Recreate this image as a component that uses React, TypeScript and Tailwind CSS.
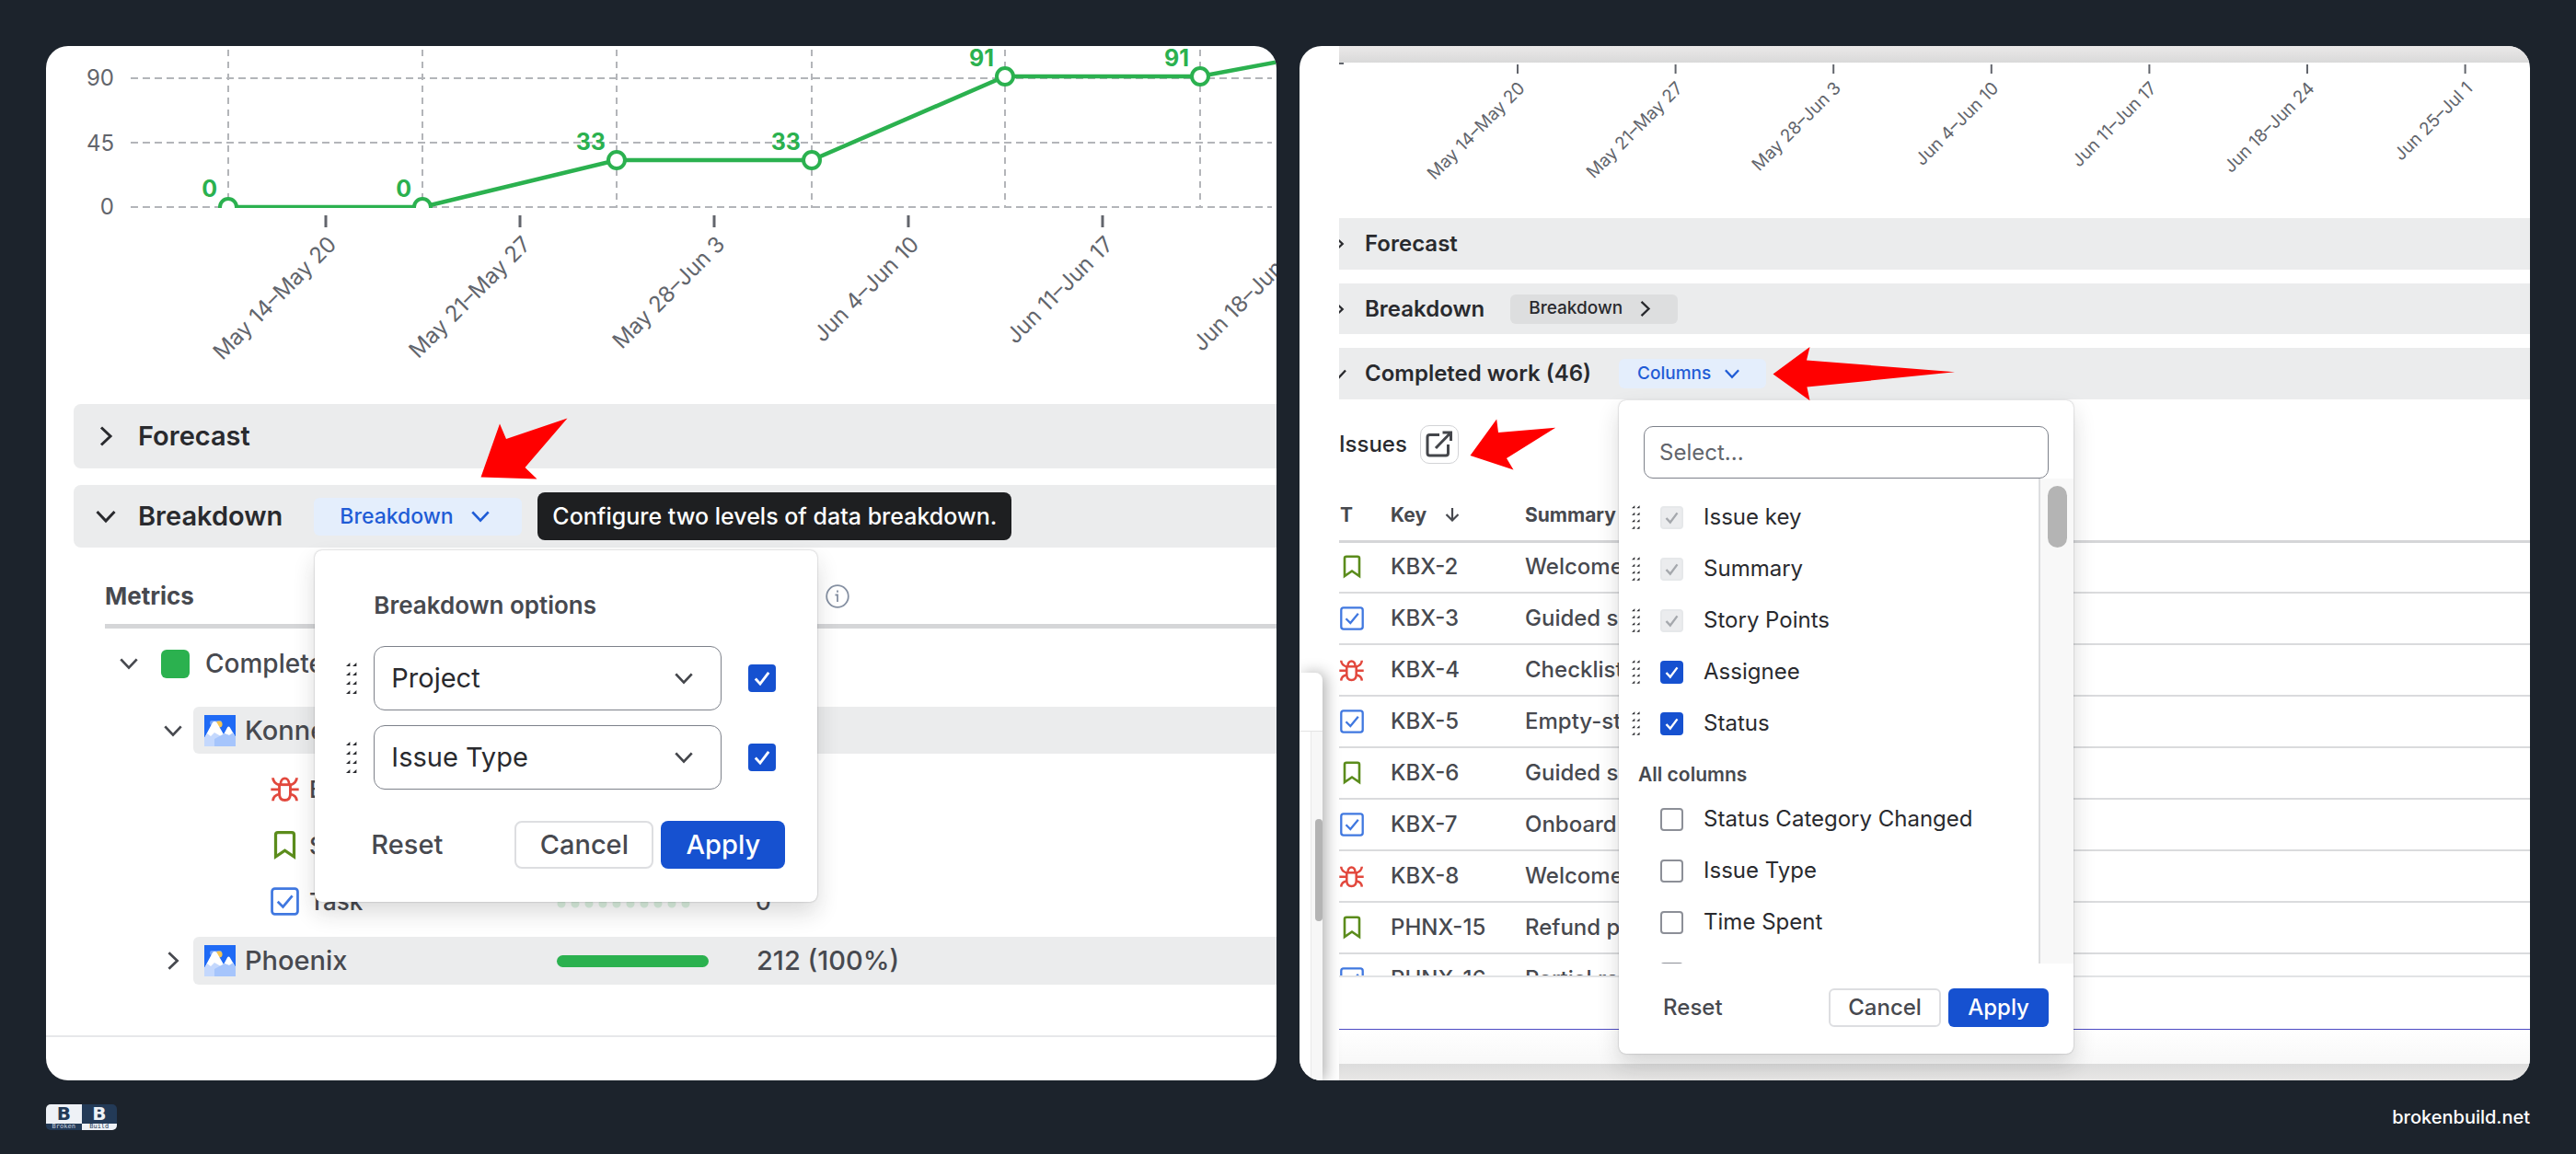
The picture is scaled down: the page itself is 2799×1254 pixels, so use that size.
import React from "react";

type IconProps = { className?: string };

function ChevronDown({ className = "" }: IconProps) {
  return (
    <svg viewBox="0 0 24 24" className={className} fill="none" stroke="currentColor" strokeWidth="3" aria-hidden="true">
      <path d="M2.5 7 L12 17 L21.5 7" />
    </svg>
  );
}

function ChevronRight({ className = "" }: IconProps) {
  return (
    <svg viewBox="0 0 24 24" className={className} fill="none" stroke="currentColor" strokeWidth="3" aria-hidden="true">
      <path d="M7 2.5 L17 12 L7 21.5" />
    </svg>
  );
}

function Grip({ className = "" }: IconProps) {
  return (
    <svg viewBox="0 0 12 36" className={className} fill="#292a2e" aria-hidden="true">
      {[1, 11, 21, 31].map((y) => (
        <g key={y}>
          <path d={`M0 ${y + 4} L4.4 ${y} L4.4 ${y + 4} Z`} />
          <path d={`M7 ${y + 4} L11.4 ${y} L11.4 ${y + 4} Z`} />
        </g>
      ))}
    </svg>
  );
}

function BugIcon({ className = "" }: IconProps) {
  return (
    <svg viewBox="0 0 27 25" className={className} fill="none" stroke="#e2483d" strokeWidth="2.5" aria-label="Bug" role="img">
      <path d="M7.5 8.3 H19.5" />
      <path d="M9.4 8.3 C9.4 0.4 17.6 0.4 17.6 8.3" />
      <path d="M8.3 8.3 V17 C8.3 21 10.2 23 13.5 23 C16.8 23 18.7 21 18.7 17 V8.3" />
      <path d="M0.3 12.8 H8 M19 12.8 H26.7" />
      <path d="M2.2 1.8 C2.4 5.3 4.6 7.4 8.3 8.6 M24.8 1.8 C24.6 5.3 22.4 7.4 18.7 8.6" />
      <path d="M2.2 23.6 C2.4 20 4.6 18 8.5 17.2 M24.8 23.6 C24.6 20 22.4 18 18.5 17.2" />
    </svg>
  );
}

function StoryIcon({ className = "" }: IconProps) {
  return (
    <svg viewBox="0 0 20 26" className={className} fill="none" stroke="#5b8c1c" strokeWidth="2.6" aria-label="Story" role="img">
      <path d="M2 23 V3.8 C2 2.5 2.6 1.8 4 1.8 H16 C17.4 1.8 18 2.5 18 3.8 V23 L10 17.5 Z" />
    </svg>
  );
}

function TaskIcon({ className = "" }: IconProps) {
  return (
    <svg viewBox="0 0 26 26" className={className} fill="none" stroke="#4078e0" strokeWidth="2.3" aria-label="Task" role="img">
      <rect x="1.3" y="1.3" width="23.4" height="23.4" rx="2.6" />
      <path d="M6.5 13.2 L11.3 18 L19.8 7.8" />
    </svg>
  );
}

function ProjectAvatar() {
  return (
    <svg viewBox="0 0 34 34" className="h-[34px] w-[34px] shrink-0" aria-hidden="true">
      <rect width="34" height="34" fill="#1f6af5" />
      <rect x="6" y="6" width="13" height="5" rx="2" fill="#6fa0fa" />
      <circle cx="16" cy="10" r="3.6" fill="#f5c451" />
      <path d="M0 25 L9 8 C10 6.5 12.5 6.5 13.5 8 L21 21 L25 13.5 C25.8 12 27 12 27.8 13.5 L34 24 V34 H0 Z" fill="#ffffff" />
      <path d="M0 25 L3 20 L7 23 L11 19 L18 23 L22 20 L27 22 L31 19 L34 24 V34 H0 Z" fill="#c4d8fd" />
      <path d="M11 34 V26 L22 20 L27 22 L31 20 L34 24 V34 Z" fill="#a6c5fc" />
    </svg>
  );
}

function CheckBox({ id, label, checked, disabled, large }: { id: string; label?: string; checked?: boolean; disabled?: boolean; large?: boolean }) {
  return (
    <span className="relative inline-flex shrink-0">
      <input
        type="checkbox"
        id={id}
        aria-label={label}
        defaultChecked={checked}
        disabled={disabled}
        className={`${large ? "h-[30px] w-[30px]" : "h-[25px] w-[25px]"} peer appearance-none rounded-[4px] border-2 border-[#8c8f97] bg-white checked:border-[#1651d0] checked:bg-[#1651d0] disabled:border-[#e6e8ea] disabled:bg-[#ebecee]`}
      />
      <svg
        viewBox="0 0 25 25"
        fill="none"
        strokeWidth="2.4"
        className="pointer-events-none absolute inset-0 h-full w-full stroke-transparent peer-checked:stroke-white peer-disabled:stroke-[#a5a8ad]"
        aria-hidden="true"
      >
        <path d="M6.5 13 L10.8 17.6 L18.5 7.4" />
      </svg>
    </span>
  );
}

const leftPoints = [
  { x: 198, y: 175, v: "0" },
  { x: 409, y: 175, v: "0" },
  { x: 620, y: 124, v: "33" },
  { x: 832, y: 124, v: "33" },
  { x: 1042, y: 33, v: "91" },
  { x: 1254, y: 33, v: "91" },
];

const weeks = ["May 14–May 20", "May 21–May 27", "May 28–Jun 3", "Jun 4–Jun 10", "Jun 11–Jun 17", "Jun 18–Jun 24", "Jun 25–Jul 1"];

function LineChart() {
  return (
    <svg viewBox="0 0 1337 389" preserveAspectRatio="xMinYMin slice" className="block h-[389px] w-full" role="img" aria-label="Completed work by week">
      <defs>
        <clipPath id="plot">
          <rect x="0" y="0" width="1337" height="176" />
        </clipPath>
      </defs>
      <g stroke="#b3b5b9" strokeWidth="2" strokeDasharray="8 5">
        {[35, 105, 175].map((y) => (
          <line key={y} x1="92" x2="1332" y1={y} y2={y} />
        ))}
      </g>
      <g stroke="#b3b5b9" strokeWidth="2" strokeDasharray="7 6">
        {leftPoints.map((p) => (
          <line key={p.x} x1={p.x} x2={p.x} y1="4" y2="176" />
        ))}
      </g>
      <g fontSize="24" fill="#62656c" textAnchor="end">
        <text x="74" y="43">90</text>
        <text x="74" y="114">45</text>
        <text x="74" y="183">0</text>
      </g>
      <g clipPath="url(#plot)" stroke="#2bb14f" fill="none">
        <polyline points="198,175 409,175 620,124 832,124 1042,33 1254,33 1340,17" strokeWidth="4.5" />
        {leftPoints.map((p) => (
          <circle key={p.x} cx={p.x} cy={p.y} r="9" fill="#fff" strokeWidth="4" />
        ))}
      </g>
      <g fontSize="25" fontWeight="700" fill="#2bb14f" textAnchor="end">
        {leftPoints.map((p) => (
          <text key={p.x} x={p.x - 12} y={p.y - 11}>{p.v}</text>
        ))}
      </g>
      {weeks.slice(0, 6).map((w, i) => (
        <g key={w}>
          <line x1={304 + i * 211} x2={304 + i * 211} y1="184" y2="197" stroke="#62656c" strokeWidth="3" />
          <text transform={`translate(${317 + i * 211} 217) rotate(-45)`} fontSize="24" fill="#62656c" textAnchor="end">{w}</text>
        </g>
      ))}
    </svg>
  );
}

function AxisLabels() {
  return (
    <svg viewBox="0 0 1294 169" preserveAspectRatio="xMinYMin slice" className="block h-[169px] w-full" role="img" aria-label="Weeks">
      <rect x="0" y="0" width="5" height="2" fill="#62656c" />
      {weeks.map((w, i) => (
        <g key={w}>
          <line x1={194 + i * 171.6} x2={194 + i * 171.6} y1="2" y2="12" stroke="#62656c" strokeWidth="2" />
          <text transform={`translate(${203 + i * 171.6} 29) rotate(-45)`} fontSize="19" fill="#62656c" textAnchor="end">{w}</text>
        </g>
      ))}
    </svg>
  );
}

function SelectField({ id, value }: { id: string; value: string }) {
  return (
    <div className="flex items-center">
      <Grip className="h-9 w-3 shrink-0" />
      <div className="relative ml-[18px] flex-1">
        <select id={id} aria-label={id} defaultValue={value} className="h-[70px] w-full appearance-none rounded-xl border border-[#7d818a] bg-white px-[18px] text-[29px] font-normal text-[#292a2e]">
          <option>{value}</option>
        </select>
        <ChevronDown className="pointer-events-none absolute top-[24px] right-[30px] h-[22px] w-[22px] text-[#44464b]" />
      </div>
      <span className="ml-[29px] flex">
        <CheckBox id={`${id}-on`} label={`Use ${value}`} checked large />
      </span>
    </div>
  );
}

function BreakdownPopover() {
  return (
    <div className="absolute top-full left-0 z-20 mt-[16px] ml-px w-[546px] rounded-lg bg-white pt-[40px] pr-[35px] pb-[36px] pl-[34px] shadow-[0_12px_24px_rgba(30,31,33,0.16),0_0_2px_rgba(30,31,33,0.35)]">
      <h3 className="pl-[30px] text-[26px] leading-10 font-semibold text-[#47494f]">Breakdown options</h3>
      <div className="mt-6 flex flex-col gap-4 pr-[10px]">
        <SelectField id="first-level" value="Project" />
        <SelectField id="second-level" value="Issue Type" />
      </div>
      <div className="mt-[34px] flex items-center pl-[27px] text-[29px] font-medium">
        <button className="text-[#47494f]">Reset</button>
        <button className="ml-auto h-[52px] w-[151px] rounded-lg border-2 border-[#dddee1] text-[#47494f]">Cancel</button>
        <button className="ml-2 h-[52px] w-[135px] rounded-lg bg-[#1651d0] text-white">Apply</button>
      </div>
    </div>
  );
}

function TreeLeaf({ icon, name, children }: { icon: React.ReactNode; name: string; children?: React.ReactNode }) {
  return (
    <div className="flex h-[61px] items-center pl-[244px] text-[26px]">
      <span className="flex w-[31px] justify-center">{icon}</span>
      <span className="w-[279px] pl-[11px]">{name}</span>
      {children}
    </div>
  );
}

function LeftPanel() {
  return (
    <section className="relative overflow-hidden rounded-3xl bg-white">
      <LineChart />
      <div className="ml-[30px] flex flex-col gap-[18px] text-[29px] font-semibold text-[#292a2e]">
        <div className="flex h-[70px] items-center rounded-l-lg bg-[#ebeced] pl-[23px]">
          <ChevronRight className="h-6 w-6" />
          <h2 className="ml-[23px]">Forecast</h2>
        </div>
        <div className="flex h-[68px] items-center rounded-l-lg bg-[#ebeced] pl-[23px]">
          <ChevronDown className="h-6 w-6" />
          <h2 className="ml-[23px]">Breakdown</h2>
          <div className="relative ml-[34px]">
            <button className="flex h-[41px] w-[226px] items-center rounded-md bg-[#e4eefc] pl-7 text-[23px] font-medium text-[#1f5cd6]">
              Breakdown
              <ChevronDown className="ml-[18px] h-[22px] w-[22px]" />
            </button>
            <div role="tooltip" className="absolute top-1/2 left-full ml-[17px] -translate-y-1/2 rounded-lg bg-[#1e1f21] px-4 text-[25px] leading-[52px] font-medium whitespace-nowrap text-white">
              Configure two levels of data breakdown.
            </div>
            <svg viewBox="0 0 96 68" className="absolute bottom-full left-[181px] mb-[20px] h-[68px] w-[96px]" fill="#ff0000" aria-hidden="true">
              <path d="M0.5 65.5 L21 7.5 L28 24 L94.500 1.500 L48.500 55 L61.500 67.500 Z" />
            </svg>
            <BreakdownPopover />
          </div>
        </div>
      </div>
      <div className="text-[29px] font-medium text-[#47494f]">
        <div className="ml-[64px] flex h-[88px] items-center border-b-[5px] border-[#d5d6d8] pt-[22px]">
          <h3 className="w-[783px] text-[26px] font-bold">Metrics</h3>
          <svg viewBox="0 0 26 26" className="h-[26px] w-[26px]" fill="none" stroke="#8590a2" strokeWidth="1.8" role="img" aria-label="Info">
            <circle cx="13" cy="13" r="11.800" />
            <path d="M10.500 11.500 H13 V19 M13 6.500 V8.800" />
          </svg>
        </div>
        <div className="flex h-[76px] items-center pl-[79px]">
          <ChevronDown className="h-[22px] w-[22px]" />
          <span className="ml-6 h-[31px] w-[31px] rounded-md bg-[#2bb14f]" />
          <span className="ml-[17px] text-[28px]">Completed</span>
        </div>
        <div className="mt-[9px] flex items-center pl-[127px]">
          <ChevronDown className="h-[22px] w-[22px] shrink-0" />
          <div className="ml-[11px] flex h-[51px] flex-1 items-center rounded-l-md bg-[#ebeced] pl-3">
            <ProjectAvatar />
            <span className="ml-[10px]">Konnect</span>
          </div>
        </div>
        <div className="pt-2 pb-2">
          <TreeLeaf icon={<BugIcon className="h-[29px] w-[31px]" />} name="Bug" />
          <TreeLeaf icon={<StoryIcon className="h-[33px] w-[25px]" />} name="Story" />
          <TreeLeaf icon={<TaskIcon className="h-[31px] w-[31px]" />} name="Task">
            <svg viewBox="0 0 165 12" className="mt-1 h-3 w-[165px]" aria-hidden="true">
              <path d="M6 6 H142" stroke="#dcf2e1" strokeWidth="9" strokeLinecap="round" strokeDasharray="0 15" />
            </svg>
            <span className="ml-[52px]">0</span>
          </TreeLeaf>
        </div>
        <div className="flex items-center pl-[127px]">
          <ChevronRight className="h-[24px] w-[22px] shrink-0" />
          <div className="ml-[11px] flex h-[52px] flex-1 items-center rounded-l-md bg-[#ebeced] pl-3">
            <ProjectAvatar />
            <span className="w-[349px] pl-[10px]">Phoenix</span>
            <span className="h-[13px] w-[165px] rounded-full bg-[#2bb14f]" />
            <span className="ml-[52px]">212 (100%)</span>
          </div>
        </div>
        <div className="mt-[55px] h-[49px] border-t-2 border-[#e7e8ea]" />
      </div>
    </section>
  );
}

type IssueType = "story" | "task" | "bug";

const issues: { type: IssueType; key: string; summary: string }[] = [
  { type: "story", key: "KBX-2", summary: "Welcome" },
  { type: "task", key: "KBX-3", summary: "Guided s" },
  { type: "bug", key: "KBX-4", summary: "Checklist" },
  { type: "task", key: "KBX-5", summary: "Empty-st" },
  { type: "story", key: "KBX-6", summary: "Guided s" },
  { type: "task", key: "KBX-7", summary: "Onboard" },
  { type: "bug", key: "KBX-8", summary: "Welcome" },
  { type: "story", key: "PHNX-15", summary: "Refund p" },
  { type: "task", key: "PHNX-16", summary: "Partial re" },
];

function TypeIcon({ type }: { type: IssueType }) {
  if (type === "bug") return <BugIcon className="h-[25px] w-[27px]" />;
  if (type === "story") return <StoryIcon className="h-[26px] w-[20px]" />;
  return <TaskIcon className="h-[26px] w-[26px]" />;
}

function IssuesTable() {
  return (
    <div className="mt-[28px] h-[530px] overflow-hidden border-b-2 border-[#e2e3e5]">
      <table className="w-full table-fixed text-left text-[#47494f]">
        <thead>
          <tr className="h-[56px] border-b-[3px] border-[#d5d6d8] text-[21px]">
            <th className="w-[56px] pl-px font-bold">T</th>
            <th className="w-[146px] font-bold" aria-sort="descending">
              <span className="flex items-center">
                Key
                <svg viewBox="0 0 16 16" className="ml-[20px] h-4 w-4" fill="none" stroke="currentColor" strokeWidth="2.2" aria-hidden="true">
                  <path d="M8 1 V14.500 M1.500 8 L8 14.500 L14.500 8" />
                </svg>
              </span>
            </th>
            <th className="font-bold">Summary</th>
          </tr>
        </thead>
        <tbody>
          {issues.map((issue) => (
            <tr key={issue.key} className="h-14 border-b-2 border-[#dadbdd] text-[24px] font-medium">
              <td>
                <span className="flex w-[27px] justify-center">
                  <TypeIcon type={issue.type} />
                </span>
              </td>
              <td>{issue.key}</td>
              <td className="whitespace-nowrap">{issue.summary}</td>
            </tr>
          ))}
        </tbody>
      </table>
    </div>
  );
}

const pinnedColumns = [
  { name: "Issue key", locked: true },
  { name: "Summary", locked: true },
  { name: "Story Points", locked: true },
  { name: "Assignee", locked: false },
  { name: "Status", locked: false },
];

const otherColumns = ["Status Category Changed", "Issue Type", "Time Spent"];

function ColumnsPopover() {
  return (
    <div className="absolute top-full left-0 z-20 mt-[13px] w-[494px] rounded-lg bg-white pt-7 pb-[29px] font-normal text-[#292a2e] shadow-[0_12px_24px_rgba(30,31,33,0.16),0_0_2px_rgba(30,31,33,0.35)]">
      <div className="px-[27px]">
        <input
          type="text"
          aria-label="Columns"
          placeholder="Select..."
          className="block h-[57px] w-full rounded-[10px] border border-[#7d818a] px-4 text-[24px] placeholder:text-[#62656c]"
        />
      </div>
      <div className="flex h-[527px] overflow-hidden text-[24px]">
        <div className="flex-1 border-r-2 border-[#dddee0] pt-[14px]">
          {pinnedColumns.map((c) => (
            <label key={c.name} className="flex h-14 items-center pl-[14px]">
              <Grip className="h-[30px] w-[9px]" />
              <span className="ml-[22px] flex">
                <CheckBox id={`col-${c.name}`} checked disabled={c.locked} />
              </span>
              <span className="ml-[22px]">{c.name}</span>
            </label>
          ))}
          <h4 className="h-12 pt-2 pl-[21px] text-[21px] leading-10 font-semibold text-[#47494f]">All columns</h4>
          {otherColumns.map((name) => (
            <label key={name} className="flex h-14 items-center pl-[45px]">
              <CheckBox id={`col-${name}-all`} />
              <span className="ml-[22px]">{name}</span>
            </label>
          ))}
          <div className="flex h-14 items-center pl-[45px]">
            <CheckBox id="col-next" label="Next column" />
          </div>
        </div>
        <div className="flex w-[36px] justify-center bg-[#f8f8f8] pt-2">
          <span className="h-[67px] w-[21px] rounded-full bg-[#b4b4b4]" />
        </div>
      </div>
      <div className="mt-[27px] flex items-center pr-[27px] pl-[48px] text-[24px] font-medium text-[#47494f]">
        <button>Reset</button>
        <button className="ml-auto h-[42px] w-[122px] rounded-md border-2 border-[#dddee1]">Cancel</button>
        <button className="ml-2 h-[42px] w-[109px] rounded-md bg-[#1651d0] text-white">Apply</button>
      </div>
    </div>
  );
}

function RightPanel() {
  return (
    <section className="relative overflow-hidden rounded-3xl bg-white pl-[43px]">
      <div className="h-[18px] bg-linear-to-b from-[#ebe9e9] to-[#d9d9d9]" />
      <AxisLabels />
      <div className="flex flex-col gap-[15px] text-[24px] font-semibold text-[#292a2e]">
        <div className="flex h-14 items-center bg-[#ebeced]">
          <span className="w-[28px] overflow-hidden">
            <ChevronRight className="-ml-[10px] h-[18px] w-[20px]" />
          </span>
          <h2>Forecast</h2>
        </div>
        <div className="flex h-[55px] items-center bg-[#ebeced]">
          <span className="w-[28px] overflow-hidden">
            <ChevronRight className="-ml-[10px] h-[18px] w-[20px]" />
          </span>
          <h2>Breakdown</h2>
          <button className="ml-[28px] flex h-8 w-[182px] items-center rounded-md bg-[#dddedf] pl-5 text-[19px] font-medium">
            Breakdown
            <ChevronRight className="ml-[15px] h-[19px] w-[19px]" />
          </button>
        </div>
        <div className="flex h-14 items-center bg-[#ebeced]">
          <span className="w-[28px] overflow-hidden">
            <ChevronDown className="-ml-[10px] h-[19px] w-[19px]" />
          </span>
          <h2>Completed work (46)</h2>
          <div className="relative ml-[30px]">
            <button className="flex h-8 w-[160px] items-center rounded-md bg-[#e4eefc] pl-5 text-[19px] font-medium text-[#1f5cd6]">
              Columns
              <ChevronDown className="ml-[14px] h-[18px] w-[18px]" />
            </button>
            <svg viewBox="0 0 199 60" className="absolute top-1/2 left-full z-30 ml-[7px] h-[60px] w-[199px] -translate-y-1/2" fill="#ff0000" aria-hidden="true">
              <path d="M0.500 30.500 L40.500 1 L37 15.500 L198 28.200 L37.400 44.600 L40.500 59.200 Z" />
            </svg>
            <ColumnsPopover />
          </div>
        </div>
      </div>
      <div className="relative mt-7 flex h-[42px] items-center">
        <h3 className="text-[24px] font-medium text-[#292a2e]">Issues</h3>
        <button aria-label="Open issues" className="ml-[14px] flex h-[42px] w-[42px] items-center justify-center rounded-[10px] border border-[#d2d3d6] text-[#44464b]">
          <svg viewBox="0 0 30 30" className="h-[30px] w-[30px]" fill="none" stroke="currentColor" strokeWidth="3" aria-hidden="true">
            <path d="M15 4.500 H4.500 C3 4.500 2 5.500 2 7 V24.500 C2 26 3 27 4.500 27 H22 C23.500 27 24.500 26 24.500 24.500 V15" />
            <path d="M18.500 2 H27.500 V11 M27.500 2 L11 19" />
          </svg>
        </button>
        <svg viewBox="0 0 94 56" className="ml-[12px] h-[56px] w-[94px]" fill="#ff0000" aria-hidden="true">
          <path d="M0.500 40 L29.200 0.500 L31 15 L93.200 9.800 L40 43 L47.500 55.500 Z" />
        </svg>
      </div>
      <IssuesTable />
      <div className="mt-14 h-[38px] border-t border-[#4d4bc4] bg-linear-to-b from-white to-[#f8f8f8]" />
      <div className="h-[18px] bg-linear-to-b from-[#dcdcdc] to-[#e8e7e6]" />
      <div className="absolute bottom-0 left-0 flex h-[443px] w-[25px] flex-col rounded-tr-lg bg-white shadow-[4px_0_16px_rgba(0,0,0,0.3)]">
        <div className="h-[64px] border-b border-[#e4e4e4]" />
        <div className="flex flex-1 justify-end">
          <div className="w-[13px] border-l border-[#e8e8e8] bg-[#f7f7f7] pt-[95px] pl-1">
            <div className="h-[111px] w-2 rounded-full bg-[#b4b4b4]" />
          </div>
        </div>
      </div>
    </section>
  );
}

function Logo() {
  return (
    <div className="grid w-[77px] grid-cols-2 overflow-hidden rounded-[5px] text-center font-['DejaVu_Sans',sans-serif]">
      <span className="bg-[#eef1f6] text-[20px] leading-[21px] font-bold text-[#233a57]">B</span>
      <span className="bg-[#233a57] text-[20px] leading-[21px] font-bold text-[#eef1f6]">B</span>
      <span className="bg-[#233a57] font-['DejaVu_Sans_Mono',monospace] text-[7px] leading-[7px] text-[#c9d3e0]">Broken</span>
      <span className="bg-[#eef1f6] font-['DejaVu_Sans_Mono',monospace] text-[7px] leading-[7px] text-[#233a57]">Build</span>
    </div>
  );
}

export default function App() {
  return (
    <div className="flex min-h-screen flex-col bg-[#1c232c] font-['Inter',sans-serif]">
      <main className="grid grid-cols-2 gap-[25px] px-[50px] pt-[50px]">
        <LeftPanel />
        <RightPanel />
      </main>
      <footer className="flex h-20 items-center justify-between px-[50px]">
        <Logo />
        <a href="#" className="text-[20px] font-medium text-white">brokenbuild.net</a>
      </footer>
    </div>
  );
}
